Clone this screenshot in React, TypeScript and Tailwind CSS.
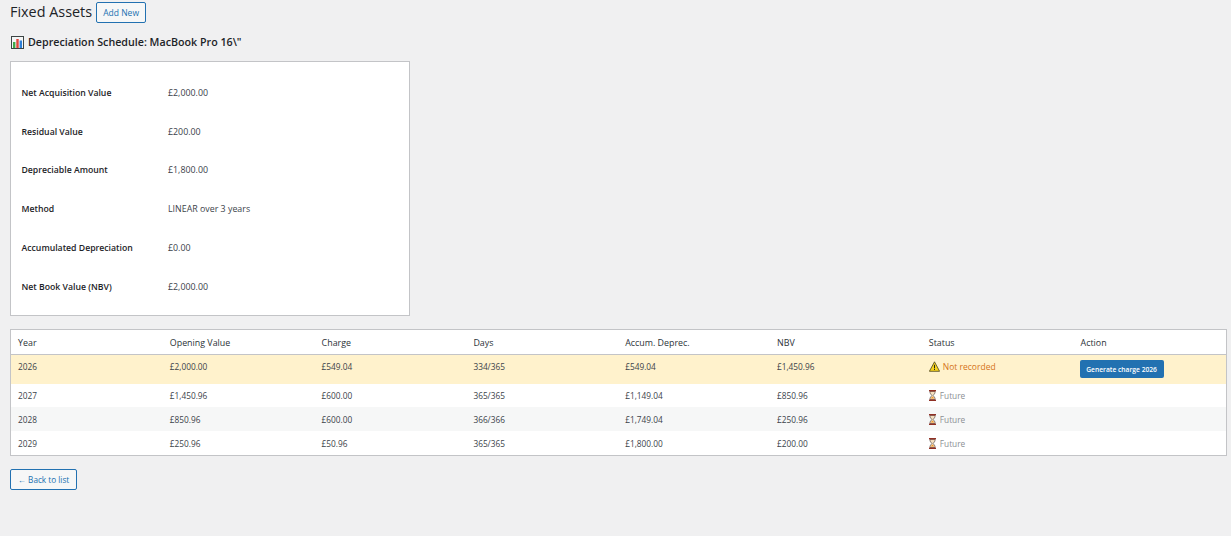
import React from 'react';

const summary = [
  { label: 'Net Acquisition Value', value: '£2,000.00' },
  { label: 'Residual Value', value: '£200.00' },
  { label: 'Depreciable Amount', value: '£1,800.00' },
  { label: 'Method', value: 'LINEAR over 3 years' },
  { label: 'Accumulated Depreciation', value: '£0.00' },
  { label: 'Net Book Value (NBV)', value: '£2,000.00' },
];

const columns = ['Year', 'Opening Value', 'Charge', 'Days', 'Accum. Deprec.', 'NBV', 'Status', 'Action'];

const rows = [
  { year: '2026', opening: '£2,000.00', charge: '£549.04', days: '334/365', accum: '£549.04', nbv: '£1,450.96', current: true },
  { year: '2027', opening: '£1,450.96', charge: '£600.00', days: '365/365', accum: '£1,149.04', nbv: '£850.96', height: 'h-[23px]', bg: 'bg-white' },
  { year: '2028', opening: '£850.96', charge: '£600.00', days: '366/366', accum: '£1,749.04', nbv: '£250.96', height: 'h-[24px]', bg: 'bg-[#f6f7f7]' },
  { year: '2029', opening: '£250.96', charge: '£50.96', days: '365/365', accum: '£1,800.00', nbv: '£200.00', height: 'h-[24px]', bg: 'bg-white' },
];

function ChartIcon() {
  return (
    <svg width="13" height="13" viewBox="0 0 13 13" className="shrink-0">
      <rect x="0.5" y="0.5" width="12" height="12" fill="#f4f6f6" stroke="#3c4444" />
      <rect x="2" y="6" width="2.4" height="6" fill="#3fa84a" />
      <rect x="5.3" y="3" width="2.4" height="9" fill="#e2453c" />
      <rect x="8.6" y="4.5" width="2.4" height="7.5" fill="#2f80d8" />
    </svg>
  );
}

function WarningIcon() {
  return (
    <svg width="11" height="11" viewBox="0 0 11 11" className="shrink-0">
      <path d="M5.5 0.8 L10.6 10.3 H0.4 Z" fill="#f7d31c" stroke="#4a4420" strokeWidth="0.8" strokeLinejoin="round" />
      <rect x="5" y="3.8" width="1" height="3.6" fill="#2d2a14" />
      <rect x="5" y="8" width="1" height="1" fill="#2d2a14" />
    </svg>
  );
}

function HourglassIcon() {
  return (
    <svg width="7" height="11" viewBox="0 0 7 11" className="shrink-0">
      <path d="M1 1.5 H6 V3 L4.2 5.5 L6 8 V9.5 H1 V8 L2.8 5.5 L1 3 Z" fill="#f3dfc0" stroke="#5f5650" strokeWidth="0.7" />
      <path d="M1.6 8.6 L3.5 6.6 L5.4 8.6 Z" fill="#ef9a2e" />
      <rect x="0" y="0" width="7" height="1.5" fill="#8f3024" />
      <rect x="0" y="9.5" width="7" height="1.5" fill="#8f3024" />
    </svg>
  );
}

export default function App() {
  return (
    <div className="min-h-[536px] bg-[#f0f0f1] pl-[10px] pr-[4px] text-[9px] leading-[13px] text-[#3c434a] font-['Open_Sans',sans-serif] overflow-hidden">
      <div className="flex items-center h-[23px] pt-[1px]">
        <h1 className="text-[14.4px] leading-[22px] font-normal text-[#1d2327]">Fixed Assets</h1>
        <a className="ml-[4px] flex h-[21px] w-[50px] items-center justify-center rounded-[2px] border border-[#2271b1] bg-[#f6f7f7] text-[8.5px] text-[#2271b1]">
          Add New
        </a>
      </div>

      <h2 className="mt-[11px] flex h-[16px] items-center gap-[4px] pl-[1px] text-[10.7px] font-semibold text-[#1d2327]">
        <ChartIcon />
        <span>Depreciation Schedule: MacBook Pro 16\"</span>
      </h2>

      <div className="mt-[11px] h-[255px] w-[400px] border border-[#c3c4c7] bg-white pl-[10.5px] pt-[11px]">
        {summary.map((item) => (
          <div key={item.label} className="flex h-[38.8px] items-center">
            <div className="w-[146.5px] pt-[2px] font-semibold text-[8.7px] text-[#1d2327]">{item.label}</div>
            <div className="pt-[2px] text-[8.85px]">{item.value}</div>
          </div>
        ))}
      </div>

      <div className="mt-[13px] w-[1217px] overflow-hidden border border-[#c3c4c7] bg-white text-[8.3px]">
        <div className="grid h-[25px] grid-cols-[repeat(8,151.8px)] items-center border-b border-[#c3c4c7] pl-[7px] text-[8.9px] text-[#2c3338]">
          {columns.map((col) => (
            <div key={col}>{col}</div>
          ))}
        </div>
        {rows.map((row) => (
          <div
            key={row.year}
            className={
              row.current
                ? 'grid h-[29px] grid-cols-[repeat(8,151.8px)] items-start bg-[#fff2cc] pl-[7px] pt-[5px]'
                : `grid grid-cols-[repeat(8,151.8px)] items-center pl-[7px] ${row.height} ${row.bg}`
            }
          >
            <div>{row.year}</div>
            <div>{row.opening}</div>
            <div>{row.charge}</div>
            <div>{row.days}</div>
            <div>{row.accum}</div>
            <div>{row.nbv}</div>
            {row.current ? (
              <div className="flex items-center gap-[3px] text-[8.5px] text-[#d5731a]">
                <WarningIcon />
                <span>Not recorded</span>
              </div>
            ) : (
              <div className="flex items-center gap-[4px] text-[#8c8f94]">
                <HourglassIcon />
                <span>Future</span>
              </div>
            )}
            <div>
              {row.current && (
                <button
                  type="button"
                  className="-ml-[1px] flex h-[18px] w-[84px] items-center justify-center rounded-[2px] bg-[#2271b1] text-[6.7px] font-semibold text-white"
                >
                  Generate charge 2026
                </button>
              )}
            </div>
          </div>
        ))}
      </div>

      <a className="mt-[13px] flex h-[21px] w-[67px] items-center justify-center rounded-[2px] border border-[#2271b1] bg-[#f6f7f7] text-[8.2px] text-[#2271b1]">
        ← Back to list
      </a>
    </div>
  );
}
